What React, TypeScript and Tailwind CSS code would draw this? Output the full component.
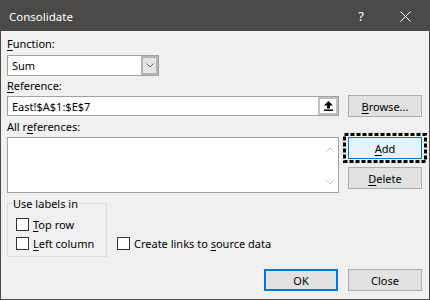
import React from "react";

function Chevron({ up = false, color = "#606060" }: { up?: boolean; color?: string }) {
  return (
    <svg width="8" height="5" viewBox="0 0 8 5" className="block">
      <polyline
        points={up ? "0.5,4.5 4,1 7.5,4.5" : "0.5,0.5 4,4 7.5,0.5"}
        fill="none"
        stroke={color}
        strokeWidth="1"
      />
    </svg>
  );
}

function Checkbox({ label }: { label: React.ReactNode }) {
  return (
    <div className="flex h-[13px] items-center">
      <div className="h-[13px] w-[13px] shrink-0 border border-[#333333] bg-white" />
      <span className="ml-[4px] whitespace-nowrap leading-[13px]">{label}</span>
    </div>
  );
}

function U({ children }: { children: React.ReactNode }) {
  return <span className="underline underline-offset-[2px] decoration-1">{children}</span>;
}

function Btn({
  children,
  variant = "normal",
}: {
  children: React.ReactNode;
  variant?: "normal" | "focus" | "default";
}) {
  const cls =
    variant === "focus"
      ? "border border-[#0078d7] bg-[#e5f1fb]"
      : variant === "default"
      ? "border-2 border-[#0078d7] bg-[#e1e1e1]"
      : "border border-[#adadad] bg-[#e1e1e1]";
  return (
    <div className={`flex h-[22px] w-[74px] items-center justify-center leading-[15px] ${cls}`}>
      {children}
    </div>
  );
}

export default function App() {
  return (
    <div className="flex h-[300px] w-[430px] flex-col overflow-hidden border border-[#4b4a48] bg-[#f0f0f0] font-['Noto_Sans',sans-serif] text-[11px] leading-[15px] text-black">
      {/* Title bar */}
      <div className="flex h-[30px] shrink-0 items-center bg-[#4b4a48] pl-[8px] pr-[18px] text-white">
        <span className="flex-1 text-[11.5px]">Consolidate</span>
        <span className="text-[13px] leading-[15px]">?</span>
        <svg width="11" height="11" viewBox="0 0 11 11" className="ml-[36px] block">
          <line x1="0.5" y1="0.5" x2="10.5" y2="10.5" stroke="#ffffff" strokeWidth="1" />
          <line x1="10.5" y1="0.5" x2="0.5" y2="10.5" stroke="#ffffff" strokeWidth="1" />
        </svg>
      </div>

      {/* Body */}
      <div className="flex flex-col pl-[6px] pr-[7px] pt-[5px]">
        {/* Function */}
        <div className="h-[15px]">
          <U>F</U>unction:
        </div>
        <div className="mt-[4px] flex h-[21px] w-[152px] border border-[#a0a0a0] bg-white">
          <div className="flex flex-1 items-center pl-[4px]">Sum</div>
          <div className="flex w-[17px] items-center justify-center border-2 border-[#b4b4b4] bg-[#e5e5e5]">
            <Chevron />
          </div>
        </div>

        {/* Reference */}
        <div className="mt-[2px] h-[15px]">
          <U>R</U>eference:
        </div>
        <div className="mt-[2px] flex items-start gap-[9px]">
          <div className="mt-[1px] flex h-[20px] w-[332px] border border-[#a0a0a0] bg-white">
            <div className="flex flex-1 items-center pl-[4px]">East!$A$1:$E$7</div>
            <div className="flex w-[20px] items-center justify-center border-2 border-[#c0c0c0] bg-white">
              <svg width="9" height="10" viewBox="0 0 9 10" className="block">
                <polygon points="4.5,0 9,4.5 6,4.5 6,7.5 3,7.5 3,4.5 0,4.5" fill="#000000" />
                <rect x="0" y="8.5" width="9" height="1.5" fill="#000000" />
              </svg>
            </div>
          </div>
          <Btn>
            <span>
              <U>B</U>rowse...
            </span>
          </Btn>
        </div>

        {/* All references */}
        <div className="mt-[2px] flex gap-[9px]">
          <div className="flex w-[332px] flex-col">
            <div className="h-[15px]">
              All r<U>e</U>ferences:
            </div>
            <div className="mt-[3px] flex h-[56px] border border-[#a0a0a0] bg-white">
              <div className="flex-1" />
              <div className="flex w-[17px] flex-col items-center justify-between pb-[7px] pt-[9px]">
                <Chevron up color="#c4c4c4" />
                <Chevron color="#c4c4c4" />
              </div>
            </div>
          </div>
          <div className="flex flex-col pt-[18px]">
            <div className="relative">
              <Btn variant="focus">
                <span>
                  <U>A</U>dd
                </span>
              </Btn>
              <svg
                width="84"
                height="30"
                viewBox="0 0 84 30"
                className="pointer-events-none absolute left-[-5px] top-[-4px] block"
              >
                <rect
                  x="1.5"
                  y="1.5"
                  width="81"
                  height="27"
                  fill="none"
                  stroke="#000000"
                  strokeWidth="3"
                  strokeDasharray="4 2"
                />
              </svg>
            </div>
            <div className="mt-[8px]">
              <Btn>
                <span>
                  <U>D</U>elete
                </span>
              </Btn>
            </div>
          </div>
        </div>

        {/* Labels group */}
        <div className="flex items-end">
          <div className="relative mt-[10px] h-[54px] w-[100px] border border-[#dcdcdc] pl-[8px] pt-[14px]">
            <span className="absolute left-[4px] top-[-8px] bg-[#f0f0f0] px-[1px] leading-[15px]">
              Use labels in
            </span>
            <Checkbox
              label={
                <>
                  <U>T</U>op row
                </>
              }
            />
            <div className="mt-[6px]">
              <Checkbox
                label={
                  <>
                    <U>L</U>eft column
                  </>
                }
              />
            </div>
          </div>
          <div className="mb-[7px] ml-[10px]">
            <Checkbox
              label={
                <>
                  Create links to <U>s</U>ource data
                </>
              }
            />
          </div>
        </div>

        {/* OK / Close */}
        <div className="mt-[12px] flex justify-end gap-[10px]">
          <Btn variant="default">OK</Btn>
          <Btn>Close</Btn>
        </div>
      </div>
    </div>
  );
}
